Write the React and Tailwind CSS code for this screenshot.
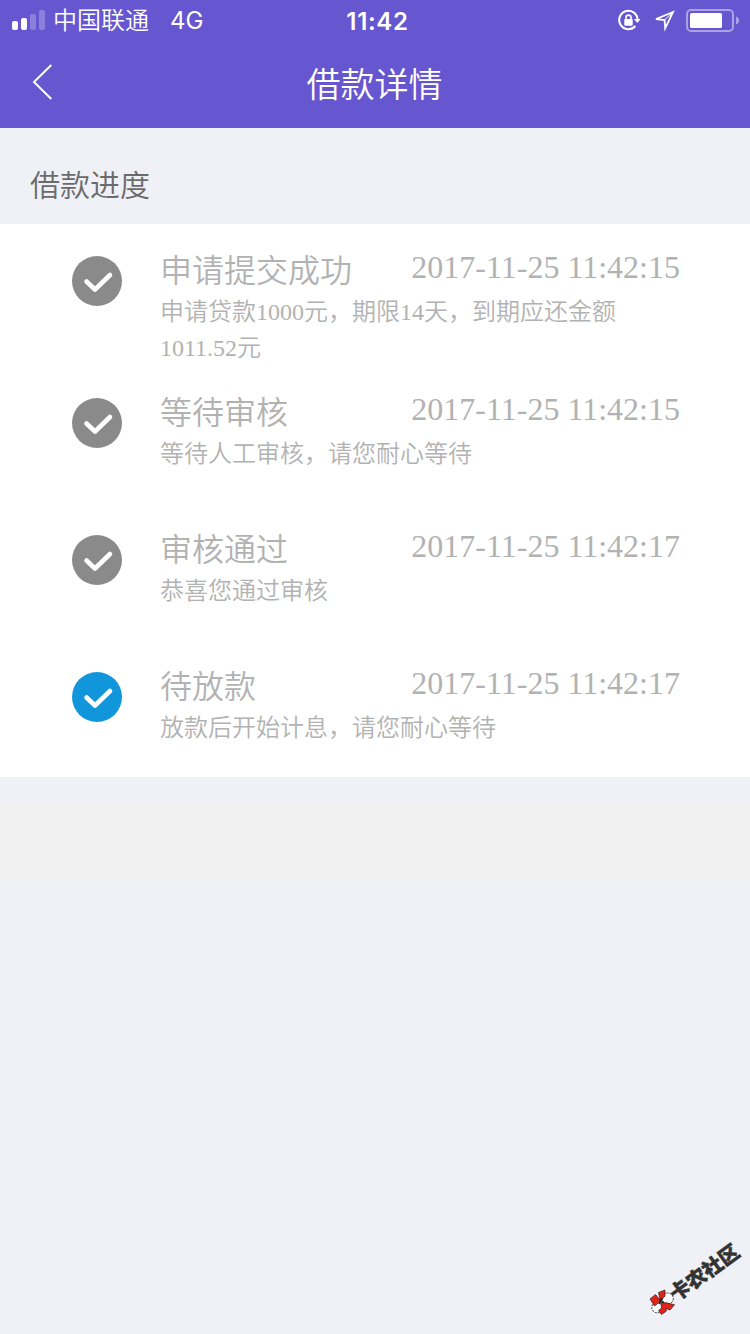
import React from 'react';

const steps = [
  {
    title: '申请提交成功',
    time: '2017-11-25 11:42:15',
    desc: '申请贷款1000元，期限14天，到期应还金额1011.52元',
  },
  {
    title: '等待审核',
    time: '2017-11-25 11:42:15',
    desc: '等待人工审核，请您耐心等待',
  },
  {
    title: '审核通过',
    time: '2017-11-25 11:42:17',
    desc: '恭喜您通过审核',
  },
  {
    title: '待放款',
    time: '2017-11-25 11:42:17',
    desc: '放款后开始计息，请您耐心等待',
    active: true,
  },
];

const StatusBar = () => (
  <div className="grid h-10 grid-cols-3 items-center pl-3 pr-[11px] text-2xl">
    <div className="flex items-center">
      <div className="flex h-5 items-end gap-[3px]">
        <span className="h-[9px] w-1.5 rounded-[2px] bg-white" />
        <span className="h-3 w-1.5 rounded-[2px] bg-white" />
        <span className="h-4 w-1.5 rounded-[2px] bg-white/25" />
        <span className="h-5 w-1.5 rounded-[2px] bg-white/25" />
      </div>
      <span className="ml-2 whitespace-nowrap pt-0.5">中国联通</span>
      <span className="ml-[21px] pt-0.5 font-normal">4G</span>
    </div>
    <div className="pl-1 pt-[3px] text-center font-semibold tracking-[0.7px]">11:42</div>
    <div className="flex items-center justify-end">
      {/* Rotation lock */}
      <svg className="mt-0.5 h-6 w-6" viewBox="0 0 24 24" fill="none">
        <path d="M21.6 10.5A9.2 9.2 0 1 0 19.4 17" stroke="white" strokeWidth="2" />
        <path d="M18 10h6.5l-3.2 4z" fill="white" />
        <rect x="8.3" y="10" width="8.4" height="6.8" rx="1" fill="white" />
        <path d="M10 11V8.6a2.5 2.5 0 0 1 5 0V11" stroke="white" strokeWidth="1.6" />
      </svg>
      {/* Location */}
      <svg className="ml-[13px] h-6 w-6" viewBox="0 0 24 24" fill="none">
        <path d="M20 4 3 11.2l8.6.9.6 8.2z" stroke="white" strokeWidth="1.8" />
        <path d="M11.5 12 20 4" stroke="white" strokeWidth="1" />
      </svg>
      {/* Battery */}
      <svg className="ml-[9px] h-6 w-[53px]" viewBox="0 0 53 24" fill="none">
        <rect x="1" y="2" width="46" height="21" rx="4" stroke="white" strokeOpacity="0.45" strokeWidth="2" />
        <rect x="4" y="5" width="32" height="15" rx="1.5" fill="white" />
        <path d="M50 8.5c4 1 4 7 0 8z" fill="white" fillOpacity="0.45" />
      </svg>
    </div>
  </div>
);

const NavBar = () => (
  <div className="grid h-[88px] grid-cols-[60px_1fr_60px] items-center">
    <svg className="mb-1 ml-8 h-9 w-5" viewBox="0 0 20 36" fill="none">
      <path d="M19.3 1 2 18l17.3 17" stroke="white" strokeWidth="2" />
    </svg>
    <h1 className="pr-px pt-0.5 text-center text-[34px] leading-none">借款详情</h1>
  </div>
);

const CheckIcon = ({ active }) => (
  <svg className="h-[50px] w-[50px] shrink-0" viewBox="0 0 50 50" fill="none">
    <circle cx="25" cy="25" r="25" className={active ? 'fill-[#1296db]' : 'fill-[#8a8a8a]'} />
    <path d="M14.5 25.5 23 33.5l15-14.5" stroke="white" strokeWidth="4.6" strokeLinecap="round" strokeLinejoin="round" />
  </svg>
);

const Step = ({ title, time, desc, active }) => (
  <li className="flex min-h-[137px] pl-[72px] pr-[70px] pt-8">
    <CheckIcon active={active} />
    <div className="ml-[38px] flex-1">
      <div className="flex h-[38px] items-start justify-between text-[32px] leading-[31px]">
        <h2>{title}</h2>
        <time className="font-['Liberation_Serif',serif] leading-[22px]">{time}</time>
      </div>
      <p className="w-[460px] text-2xl leading-9">{desc}</p>
    </div>
  </li>
);

const Watermark = () => (
  <div className="absolute left-[640px] top-[1230px] h-[104px] w-[110px]">
    <svg className="absolute left-2 top-[57px] h-8 w-8" viewBox="0 0 32 32">
      <circle cx="19.8" cy="11.5" r="5.5" fill="white" stroke="#222" strokeWidth="0.9" strokeDasharray="2 1" />
      <circle cx="9.3" cy="20.3" r="5.5" fill="white" stroke="#222" strokeWidth="0.9" strokeDasharray="2 1" />
      <path
        d="M2 12 7.5 7.5 13 14l-6.5 5zM10.5 5.5 17 3v6l-4.5 5zM12.5 15.5l6 .3 8 2-4.5 5.2-4.5-1.5 1 2.5-5 3.5-3-3.8 3-3z"
        fill="#e2231a"
        stroke="#222"
        strokeWidth="0.7"
      />
      <path d="M11 12l5 4M14.5 11l-3.5 6" stroke="#222" strokeWidth="1.4" />
    </svg>
    <span className="absolute left-6 top-[30px] -rotate-[36deg] whitespace-nowrap font-['Noto_Sans_CJK_SC',sans-serif] text-xl font-black leading-6 text-[#333] [-webkit-text-stroke:0.5px_#333]">
      卡农社区
    </span>
  </div>
);

export default function App() {
  return (
    <div className="relative h-[1334px] w-[750px] overflow-hidden bg-[#f0f1f7]">
      <header className="bg-[#6656cf] font-['Inter','Noto_Sans_CJK_SC',sans-serif] font-[350] text-white">
        <StatusBar />
        <NavBar />
      </header>

      <main className="font-['Liberation_Serif','Noto_Sans_CJK_SC',serif] font-[350]">
        <h2 className="flex h-24 items-center pl-[30px] pt-5 text-[30px] leading-none text-[#6b6b6b]">借款进度</h2>
        <ul className="bg-white text-[#b2b2b2]">
          {steps.map((step, index) => (
            <Step key={index} {...step} />
          ))}
        </ul>
        <div className="mt-[25px] h-20 bg-[#f1f1f1]" />
      </main>

      <Watermark />
    </div>
  );
}
